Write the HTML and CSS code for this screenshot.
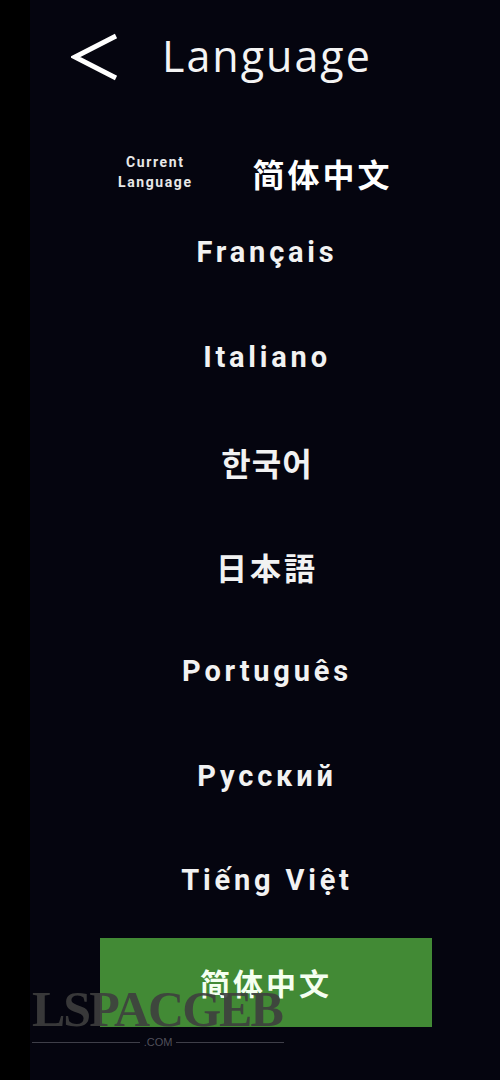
FILE: index.html
```html
<!DOCTYPE html>
<html lang="en">
<head>
<meta charset="utf-8">
<title>Language</title>
<link rel="stylesheet" href="styles.css">
</head>
<body>
<div class="screen">
  <div class="edge"></div>
  <main class="panel">
    <header class="header">
      <button class="back" aria-label="Back">
        <svg viewBox="0 0 48 48" width="48" height="48"><path d="M45 3 L4 24 L45 45" fill="none" stroke="#fff" stroke-width="4.8" stroke-linejoin="miter"/></svg>
      </button>
      <h1 class="title">Language</h1>
    </header>
    <div class="current">
      <div class="current-label">Current<br>Language</div>
      <div class="current-value cjk-sc">简体中文</div>
    </div>
    <ul class="list">
      <li class="item">Français</li>
      <li class="item">Italiano</li>
      <li class="item cjk-kr">한국어</li>
      <li class="item cjk-jp">日本語</li>
      <li class="item">Português</li>
      <li class="item">Русский</li>
      <li class="item">Tiếng Việt</li>
    </ul>
    <div class="selected cjk-sc">简体中文</div>
  </main>
  <div class="watermark">
    <div class="wm-name">LSPACGEB</div>
    <div class="wm-com"><span class="wm-line"></span><span>.COM</span><span class="wm-line"></span></div>
  </div>
</div>
</body>
</html>
```
FILE: styles.css
```css
html, body {
  margin: 0;
  padding: 0;
  background: #000;
}
.screen {
  display: flex;
  width: 500px;
  height: 1080px;
  overflow: hidden;
  position: relative;
  font-family: Roboto, "Noto Sans", sans-serif;
  color: #fff;
}
.edge {
  width: 30px;
  flex: none;
  background: #000;
}
.panel {
  flex: 1;
  background: #05050f;
  display: flex;
  flex-direction: column;
}
.header {
  height: 114px;
  display: flex;
  align-items: center;
}
.back {
  margin-left: 41px;
  padding: 0;
  border: 0;
  background: none;
  width: 48px;
  height: 48px;
  display: block;
}
.back svg { display: block; }
.title {
  margin: 0 0 0 43px;
  font-family: "Open Sans", "Noto Sans", sans-serif;
  font-weight: 400;
  font-size: 43px;
  letter-spacing: 2px;
  color: #f4f4f4;
  line-height: 1;
  padding-bottom: 4px;
}
.current {
  margin-top: 36px;
  height: 50px;
  display: flex;
  align-items: center;
  padding-left: 88px;
}
.current-label {
  font-weight: 700;
  font-size: 14px;
  line-height: 20px;
  letter-spacing: 1.6px;
  text-align: center;
  color: #e8e8e8;
  margin-top: -6px;
}
.current-value {
  margin-left: 60px;
  font-size: 32px;
  letter-spacing: 3px;
  margin-top: -5px;
}
.cjk-sc { font-family: "Noto Sans CJK SC", sans-serif; font-weight: 700; }
.item.cjk-kr { font-family: "Noto Sans CJK KR", sans-serif; font-weight: 700; font-size: 32px; letter-spacing: 1px; }
.item.cjk-jp { font-family: "Noto Sans CJK JP", sans-serif; font-weight: 700; font-size: 31px; letter-spacing: 3px; }
.list {
  list-style: none;
  margin: 0;
  padding: 0;
}
.item {
  height: 104.7px;
  display: flex;
  align-items: center;
  justify-content: center;
  font-weight: 700;
  font-size: 29px;
  letter-spacing: 3.8px;
  padding-left: 4px;
  color: #f2f2f2;
}
.selected {
  margin: 5px 0 0 70px;
  width: 332px;
  height: 89px;
  background: #428a35;
  display: flex;
  align-items: center;
  justify-content: center;
  font-size: 30px;
  letter-spacing: 3px;
  color: #f4fff0;
}
.watermark {
  position: absolute;
  left: 32px;
  top: 984px;
  width: 252px;
  pointer-events: none;
}
.wm-name {
  font-family: "Liberation Serif", serif;
  font-weight: 700;
  font-size: 50px;
  line-height: 50px;
  letter-spacing: -2px;
  color: rgba(62, 62, 62, 0.9);
}
.wm-com {
  display: flex;
  align-items: center;
  gap: 4px;
  margin-top: 2px;
  font-family: "Liberation Sans", sans-serif;
  font-size: 11px;
  color: rgba(90, 90, 100, 0.9);
}
.wm-line {
  flex: 1;
  height: 1px;
  background: rgba(70, 70, 80, 0.9);
}
```
